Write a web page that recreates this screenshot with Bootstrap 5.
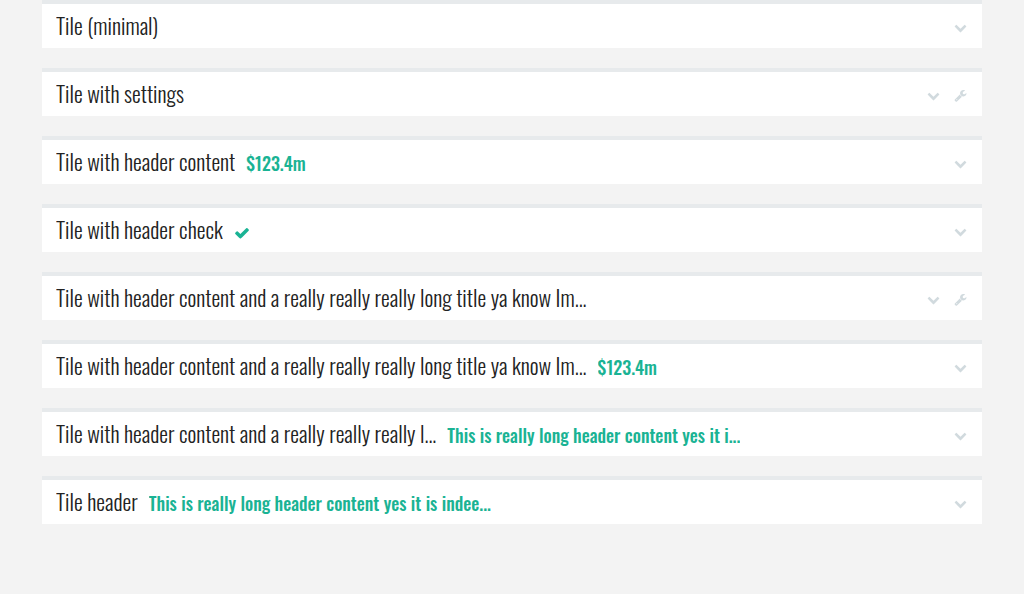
<!DOCTYPE html>
<html lang="en">
<head>
<meta charset="utf-8">
<meta name="viewport" content="width=device-width, initial-scale=1">
<title>Tiles</title>
<link rel="stylesheet" href="https://cdn.jsdelivr.net/npm/bootstrap@5.3.0/dist/css/bootstrap.min.css">
<style>
body { background: #f3f3f3; color: #222; font-family: Oswald, "Liberation Sans Narrow", "Liberation Sans", sans-serif; }
.tile-list { padding: 0 42px; gap: 20px; }
.tile { border-top: 4px solid #e7eaec; min-height: 48px; padding: 0 15px 0 14px; gap: 11px; }
.tile-title { font-size: 22px; line-height: 42px; font-weight: 300; padding-bottom: 2px; }
.tile-content { font-size: 18px; line-height: 42px; font-weight: 500; color: #1ab394; padding-top: 2px; }
.tile-tools { gap: 14px; padding-top: 3px; }
.tile-tool { color: #d1dade; line-height: 0; }
.tile-check { color: #1ab394; margin-top: 6px; }
svg { display: block; fill: currentColor; }
</style>
</head>
<body>
<svg class="d-none" aria-hidden="true">
  <symbol id="chevron" viewBox="0 0 1792 1792"><path d="M1683 808l-742 741q-19 19-45 19t-45-19l-742-741q-19-19-19-45t19-45l166-165q19-19 45-19t45 19l531 531 531-531q19-19 45-19t45 19l166 165q19 19 19 45t-19 45z"/></symbol>
  <symbol id="wrench" viewBox="0 0 1792 1792"><path d="M448 1472q0-26-19-45t-45-19-45 19-19 45 19 45 45 19 45-19 19-45zm644-420l-682 682q-37 37-90 37-52 0-91-37l-106-108q-38-36-38-90 0-53 38-91l681-681q39 98 114.500 173.500t173.500 114.500zm634-435q0 39-23 106-47 134-164.500 217.500t-258.500 83.500q-185 0-316.500-131.500t-131.500-316.500 131.500-316.500 316.500-131.500q58 0 121.500 16.500t107.500 46.500q16 11 16 28t-16 28l-293 169v224l193 107q5-3 79-48.500t135.500-81 70.500-35.500q15 0 23.500 10t8.500 25z"/></symbol>
  <symbol id="check" viewBox="0 0 1792 1792"><path d="M1671 566q0 40-28 68l-724 724-136 136q-28 28-68 28t-68-28l-136-136-362-362q-28-28-28-68t28-68l136-136q28-28 68-28t68 28l294 295 656-657q28-28 68-28t68 28l136 136q28 28 28 68z"/></symbol>
</svg>
<main class="container-fluid tile-list d-flex flex-column">
  <section class="tile bg-white d-flex align-items-center">
    <h2 class="tile-title text-truncate mb-0">Tile (minimal)</h2>
    <div class="tile-tools ms-auto d-flex">
      <button type="button" class="tile-tool btn border-0 p-0" aria-label="Collapse"><svg width="13" height="13"><use href="#chevron"/></svg></button>
    </div>
  </section>
  <section class="tile bg-white d-flex align-items-center">
    <h2 class="tile-title text-truncate mb-0">Tile with settings</h2>
    <div class="tile-tools ms-auto d-flex">
      <button type="button" class="tile-tool btn border-0 p-0" aria-label="Collapse"><svg width="13" height="13"><use href="#chevron"/></svg></button>
      <button type="button" class="tile-tool btn border-0 p-0" aria-label="Settings"><svg width="13" height="13"><use href="#wrench"/></svg></button>
    </div>
  </section>
  <section class="tile bg-white d-flex align-items-center">
    <h2 class="tile-title text-truncate mb-0">Tile with header content</h2>
    <span class="tile-content text-truncate">$123.4m</span>
    <div class="tile-tools ms-auto d-flex">
      <button type="button" class="tile-tool btn border-0 p-0" aria-label="Collapse"><svg width="13" height="13"><use href="#chevron"/></svg></button>
    </div>
  </section>
  <section class="tile bg-white d-flex align-items-center">
    <h2 class="tile-title text-truncate mb-0">Tile with header check</h2>
    <span class="tile-check"><svg width="16" height="16" role="img" aria-label="Checked"><use href="#check"/></svg></span>
    <div class="tile-tools ms-auto d-flex">
      <button type="button" class="tile-tool btn border-0 p-0" aria-label="Collapse"><svg width="13" height="13"><use href="#chevron"/></svg></button>
    </div>
  </section>
  <section class="tile bg-white d-flex align-items-center">
    <h2 class="tile-title text-truncate mb-0">Tile with header content and a really really really long title ya know Im...</h2>
    <div class="tile-tools ms-auto d-flex">
      <button type="button" class="tile-tool btn border-0 p-0" aria-label="Collapse"><svg width="13" height="13"><use href="#chevron"/></svg></button>
      <button type="button" class="tile-tool btn border-0 p-0" aria-label="Settings"><svg width="13" height="13"><use href="#wrench"/></svg></button>
    </div>
  </section>
  <section class="tile bg-white d-flex align-items-center">
    <h2 class="tile-title text-truncate mb-0">Tile with header content and a really really really long title ya know Im...</h2>
    <span class="tile-content text-truncate">$123.4m</span>
    <div class="tile-tools ms-auto d-flex">
      <button type="button" class="tile-tool btn border-0 p-0" aria-label="Collapse"><svg width="13" height="13"><use href="#chevron"/></svg></button>
    </div>
  </section>
  <section class="tile bg-white d-flex align-items-center">
    <h2 class="tile-title text-truncate mb-0">Tile with header content and a really really really l...</h2>
    <span class="tile-content text-truncate">This is really long header content yes it i...</span>
    <div class="tile-tools ms-auto d-flex">
      <button type="button" class="tile-tool btn border-0 p-0" aria-label="Collapse"><svg width="13" height="13"><use href="#chevron"/></svg></button>
    </div>
  </section>
  <section class="tile bg-white d-flex align-items-center">
    <h2 class="tile-title text-truncate mb-0">Tile header</h2>
    <span class="tile-content text-truncate">This is really long header content yes it is indee...</span>
    <div class="tile-tools ms-auto d-flex">
      <button type="button" class="tile-tool btn border-0 p-0" aria-label="Collapse"><svg width="13" height="13"><use href="#chevron"/></svg></button>
    </div>
  </section>
</main>
<script src="https://cdn.jsdelivr.net/npm/bootstrap@5.3.0/dist/js/bootstrap.bundle.min.js"></script>
</body>
</html>
